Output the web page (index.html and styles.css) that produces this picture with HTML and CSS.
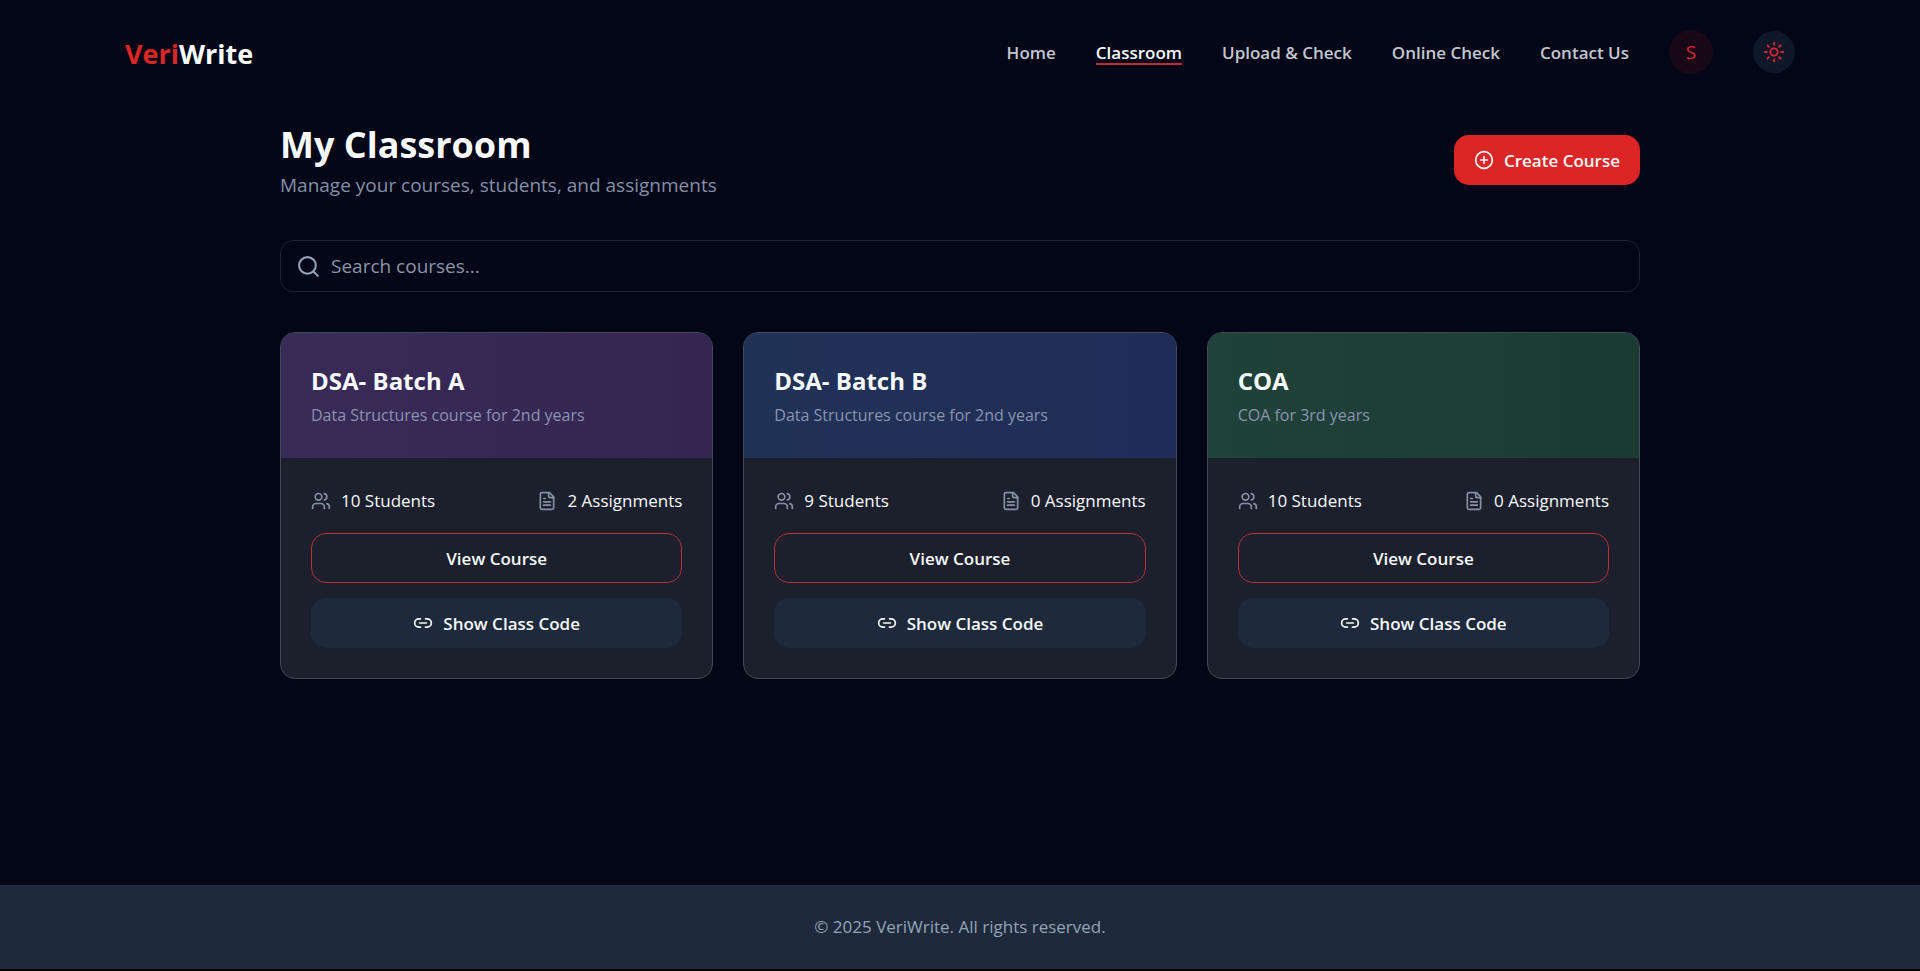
FILE: index.html
```
<!DOCTYPE html>
<html lang="en">
<head>
<meta charset="utf-8">
<meta name="viewport" content="width=device-width, initial-scale=1">
<title>VeriWrite - My Classroom</title>
<link rel="stylesheet" href="styles.css">
</head>
<body>
<svg class="sprite" aria-hidden="true">
  <symbol id="i-users" viewBox="0 0 24 24"><path d="M16 21v-2a4 4 0 0 0-4-4H6a4 4 0 0 0-4 4v2"/><circle cx="9" cy="7" r="4"/><path d="M22 21v-2a4 4 0 0 0-3-3.87"/><path d="M16 3.13a4 4 0 0 1 0 7.75"/></symbol>
  <symbol id="i-file" viewBox="0 0 24 24"><path d="M15 2H6a2 2 0 0 0-2 2v16a2 2 0 0 0 2 2h12a2 2 0 0 0 2-2V7Z"/><path d="M14 2v4a2 2 0 0 0 2 2h4"/><path d="M10 9H8"/><path d="M16 13H8"/><path d="M16 17H8"/></symbol>
  <symbol id="i-link" viewBox="0 0 24 24"><path d="M9 17H7A5 5 0 0 1 7 7h2"/><path d="M15 7h2a5 5 0 1 1 0 10h-2"/><path d="M8 12h8"/></symbol>
  <symbol id="i-plus" viewBox="0 0 24 24"><circle cx="12" cy="12" r="10"/><path d="M8 12h8"/><path d="M12 8v8"/></symbol>
  <symbol id="i-search" viewBox="0 0 24 24"><circle cx="11" cy="11" r="8"/><path d="m21 21-4.3-4.3"/></symbol>
  <symbol id="i-sun" viewBox="0 0 24 24"><circle cx="12" cy="12" r="4"/><path d="M12 2v2"/><path d="M12 20v2"/><path d="m4.93 4.93 1.41 1.41"/><path d="m17.66 17.66 1.41 1.41"/><path d="M2 12h2"/><path d="M20 12h2"/><path d="m6.34 17.66-1.41 1.41"/><path d="m19.07 4.93-1.41 1.41"/></symbol>
</svg>
<div class="app">
  <header class="topbar">
    <a class="brand" href="#"><span class="brand-accent">Veri</span>Write</a>
    <nav class="nav">
      <a class="nav-link" href="#">Home</a>
      <a class="nav-link is-active" href="#" aria-current="page">Classroom</a>
      <a class="nav-link" href="#">Upload &amp; Check</a>
      <a class="nav-link" href="#">Online Check</a>
      <a class="nav-link" href="#">Contact Us</a>
      <button class="avatar" type="button">S</button>
      <button class="theme" type="button" aria-label="Toggle theme"><svg class="icon-sun"><use href="#i-sun"/></svg></button>
    </nav>
  </header>
  <main class="main">
    <div class="page-head">
      <div>
        <h1 class="title">My Classroom</h1>
        <p class="subtitle">Manage your courses, students, and assignments</p>
      </div>
      <button class="btn btn-primary" type="button"><svg class="icon"><use href="#i-plus"/></svg>Create Course</button>
    </div>
    <div class="search">
      <svg class="icon-search"><use href="#i-search"/></svg>
      <input class="search-input" type="text" placeholder="Search courses..." aria-label="Search courses">
    </div>
    <div class="grid">
      <article class="card">
        <div class="card-head purple">
          <h2 class="card-title">DSA- Batch A</h2>
          <p class="card-desc">Data Structures course for 2nd years</p>
        </div>
        <div class="card-body">
          <div class="stats">
            <span class="stat"><svg class="icon"><use href="#i-users"/></svg>10 Students</span>
            <span class="stat"><svg class="icon"><use href="#i-file"/></svg>2 Assignments</span>
          </div>
          <div class="actions">
            <button class="btn btn-outline" type="button">View Course</button>
            <button class="btn btn-muted" type="button"><svg class="icon"><use href="#i-link"/></svg>Show Class Code</button>
          </div>
        </div>
      </article>
      <article class="card">
        <div class="card-head blue">
          <h2 class="card-title">DSA- Batch B</h2>
          <p class="card-desc">Data Structures course for 2nd years</p>
        </div>
        <div class="card-body">
          <div class="stats">
            <span class="stat"><svg class="icon"><use href="#i-users"/></svg>9 Students</span>
            <span class="stat"><svg class="icon"><use href="#i-file"/></svg>0 Assignments</span>
          </div>
          <div class="actions">
            <button class="btn btn-outline" type="button">View Course</button>
            <button class="btn btn-muted" type="button"><svg class="icon"><use href="#i-link"/></svg>Show Class Code</button>
          </div>
        </div>
      </article>
      <article class="card">
        <div class="card-head green">
          <h2 class="card-title">COA</h2>
          <p class="card-desc">COA for 3rd years</p>
        </div>
        <div class="card-body">
          <div class="stats">
            <span class="stat"><svg class="icon"><use href="#i-users"/></svg>10 Students</span>
            <span class="stat"><svg class="icon"><use href="#i-file"/></svg>0 Assignments</span>
          </div>
          <div class="actions">
            <button class="btn btn-outline" type="button">View Course</button>
            <button class="btn btn-muted" type="button"><svg class="icon"><use href="#i-link"/></svg>Show Class Code</button>
          </div>
        </div>
      </article>
    </div>
  </main>
  <footer class="footer">© 2025 VeriWrite. All rights reserved.</footer>
</div>
</body>
</html>
```
FILE: styles.css
```
* { box-sizing: border-box; }
html { background: #000; }
body {
  margin: 0;
  font-family: "Segoe UI", "Open Sans", "Noto Sans", sans-serif;
  font-size: 17px;
  line-height: 25px;
  color: #f8fafc;
}
h1, h2, p { margin: 0; }
button, input { font: inherit; color: inherit; }
button { cursor: pointer; }
a { color: inherit; text-decoration: none; }
svg {
  fill: none;
  stroke: currentColor;
  stroke-width: 2;
  stroke-linecap: round;
  stroke-linejoin: round;
  flex: none;
}
.sprite { position: absolute; width: 0; height: 0; }
.icon { width: 20px; height: 20px; }

.app {
  display: flex;
  flex-direction: column;
  min-height: calc(100vh - 2px);
  background: #020616;
}

.topbar {
  display: flex;
  align-items: center;
  justify-content: space-between;
  width: 100%;
  max-width: 1750px;
  margin: 0 auto;
  padding: 30px 40px;
}
.brand { padding-top: 4px; font-size: 27px; font-weight: 700; line-height: 40px; color: #fff; }
.brand-accent { color: #dc2626; }
.nav { display: flex; align-items: center; gap: 40px; }
.nav-link {
  padding-top: 4px;
  border-bottom: 2px solid transparent;
  font-weight: 600;
  line-height: 20px;
  color: #c3c6ce;
}
.nav-link.is-active { color: #f8fafc; border-color: #c02a33; }
.avatar, .theme {
  display: flex;
  align-items: center;
  justify-content: center;
  padding: 0;
  border: 0;
  border-radius: 50%;
}
.avatar { width: 44px; height: 44px; font-size: 19px; background: #190917; color: #dc2637; }
.theme { width: 42px; height: 42px; background: #0e1828; color: #dc2637; }
.icon-sun { width: 22px; height: 22px; }

.main {
  flex: 1;
  width: 100%;
  max-width: 1440px;
  margin: 0 auto;
  padding: 16px 40px 40px;
}
.page-head { display: flex; align-items: center; justify-content: space-between; margin-bottom: 40px; }
.title { font-size: 36px; font-weight: 700; line-height: 50px; }
.subtitle { font-size: 19px; line-height: 30px; color: #8590a6; }

.btn {
  display: flex;
  align-items: center;
  justify-content: center;
  gap: 10px;
  height: 50px;
  padding: 0 20px;
  border: 0;
  border-radius: 15px;
  font-weight: 600;
}
.btn-primary { background: #dc2626; }
.btn-outline { background: transparent; border: 1px solid #b93038; }
.btn-muted { background: #1e293b; }

.search {
  display: flex;
  align-items: center;
  gap: 10px;
  height: 52px;
  margin-bottom: 40px;
  padding: 0 15px;
  border: 1px solid #1e2433;
  border-radius: 13px;
  color: #94a3b8;
}
.icon-search { width: 25px; height: 25px; }
.search-input { flex: 1; min-width: 0; padding: 0; border: 0; outline: 0; background: none; font-size: 19px; color: #f8fafc; }
.search-input::placeholder { color: #8b95a7; opacity: 1; }

.grid { display: grid; grid-template-columns: repeat(3, 1fr); gap: 30px; }
.card { overflow: hidden; border: 1px solid #444954; border-radius: 15px; background: #1c202d; }
.card-head { display: flex; flex-direction: column; gap: 5px; padding: 30px; }
.purple { background: linear-gradient(90deg, #392b58, #342553); }
.blue { background: linear-gradient(90deg, #213257, #1e2d57); }
.green { background: linear-gradient(90deg, #1f4239, #1c3a34); }
.card-title { font-size: 24px; font-weight: 700; line-height: 35px; }
.card-desc { font-size: 16px; color: #8b93ae; }
.card-body { display: flex; flex-direction: column; gap: 20px; padding: 30px; }
.stats { display: flex; justify-content: space-between; }
.stat { display: flex; align-items: center; gap: 10px; }
.stat .icon { color: #8590a6; }
.actions { display: flex; flex-direction: column; gap: 15px; }

.footer { padding: 30px 20px; background: #1e293b; color: #94a3b8; line-height: 24px; text-align: center; }
```
